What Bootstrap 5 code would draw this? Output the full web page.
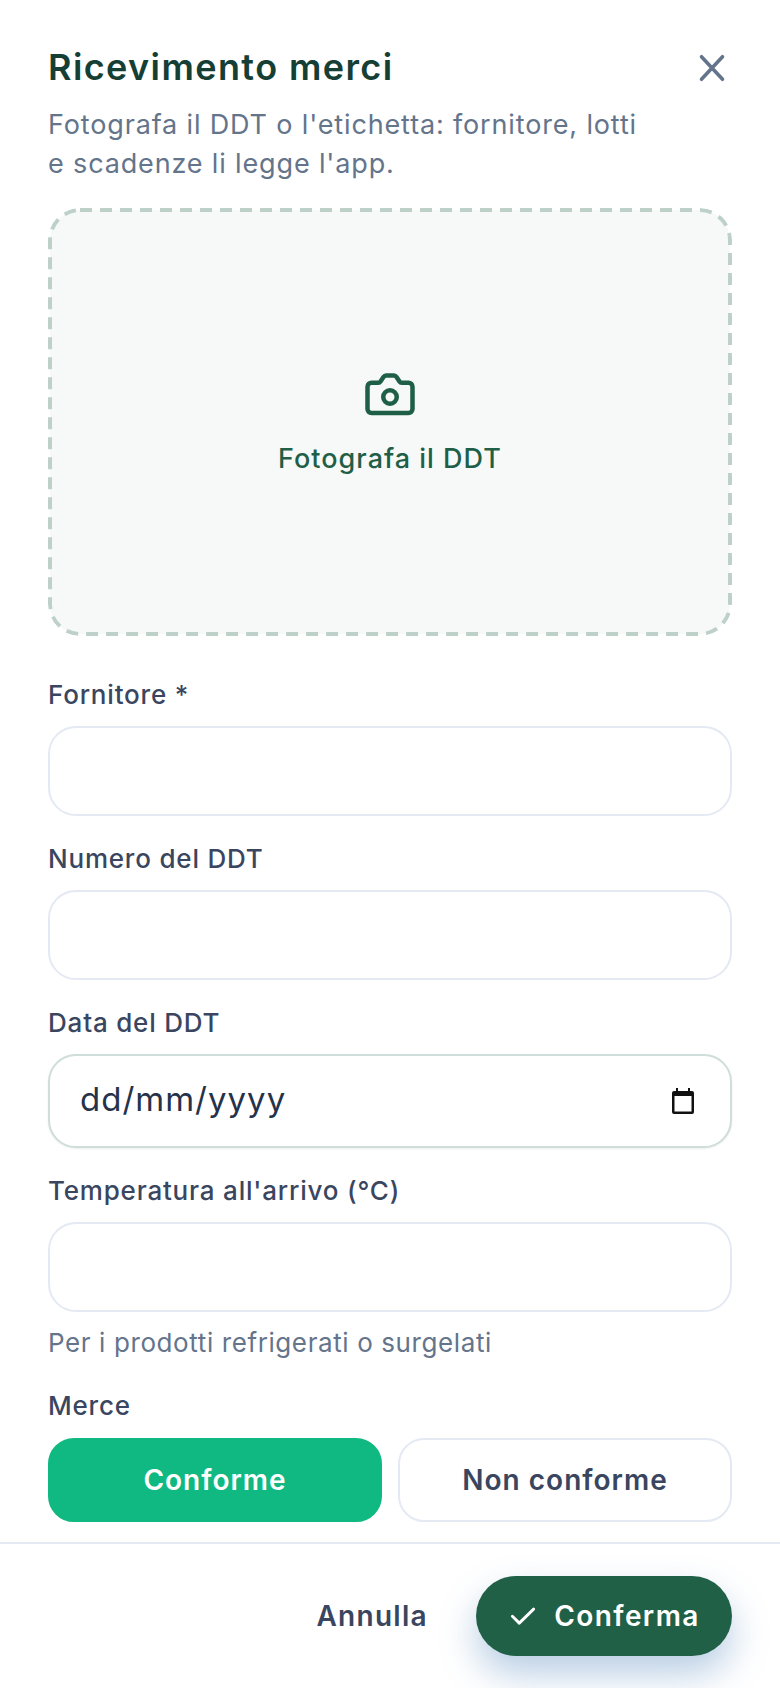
<!DOCTYPE html>
<html lang="it">
<head>
    <meta charset="UTF-8">
    <meta name="viewport" content="width=device-width, initial-scale=1.0">
    <title>Ricevimento merci</title>
    <link href="https://cdn.jsdelivr.net/npm/bootstrap@5.3.0/dist/css/bootstrap.min.css" rel="stylesheet">
    <style>
        html, body { height: 100%; }
        body { font-family: "Inter", "Liberation Sans", sans-serif; background: #fff; overflow: hidden; }
        .sheet { height: 1688px; }
        .sheet-body { padding: 48px 48px 0; overflow: hidden; }
        .sheet-title { font-size: 36px; font-weight: 600; line-height: 39px; color: #153e35; margin: 0; letter-spacing: 1.4px; }
        .sheet-close { width: 36px; height: 36px; color: #64748b; margin-right: 2px; }
        .sheet-sub { font-size: 27px; line-height: 39px; color: #64748b; margin: 18px 0 25px; letter-spacing: .85px; }
        .drop-zone { height: 428px; padding-bottom: 2px; color: #1f5f47; font-size: 27px; font-weight: 500; letter-spacing: 1px; border-radius: 32px;
            background: url("data:image/svg+xml,%3Csvg xmlns='http://www.w3.org/2000/svg' width='684' height='428'%3E%3Crect x='2' y='2' width='680' height='424' rx='30' fill='%23f6f9f8' stroke='%23bdd1c9' stroke-width='4' stroke-dasharray='12 8'/%3E%3C/svg%3E") no-repeat; }
        .field-label { display: block; font-size: 26px; font-weight: 500; line-height: 36px; color: #3a4660; padding-top: 1px; margin: 0 0 13px; letter-spacing: .8px; }
        .field-input { height: 90px; border: 2px solid #e4e9f3; border-radius: 28px; background: #fff; box-shadow: none; }
        .field-date { height: 94px; border-color: #d0dedb; font-size: 33px; line-height: 1; letter-spacing: 1px; color: #25324a; padding: 0 35px 3px 30px; box-shadow: 0 1px 2px rgba(15, 40, 30, .08); }
        .field-date svg { margin-top: 3px; }
        .field-hint { font-size: 26px; line-height: 36px; color: #64748b; margin-top: 13px; padding-bottom: 2px; letter-spacing: .6px; }
        .field-gap { margin-top: 24px; }
        .field-first { margin-top: 40px; }
        .choice-wrap { padding-top: 1px; }
        .choice { height: 84px; border-radius: 26px; font-size: 28px; font-weight: 600; border-width: 2px; letter-spacing: 1px; }
        .choice-on { background: #10b981; border-color: #10b981; color: #fff; }
        .choice-off { background: #fff; border-color: #e4e9f3; color: #3a4660; }
        .sheet-foot { border-top: 2px solid #e4e9f3; padding: 32px 48px 32px; height: 146px; flex: none; }
        .foot-cancel { font-size: 28px; font-weight: 600; color: #3a4660; border: 0; padding: 0; margin-right: 48px; letter-spacing: 1.3px; }
        .foot-ok { width: 256px; height: 80px; border-radius: 40px; border: 0; background: #206047; color: #fff; font-size: 28px; font-weight: 600; letter-spacing: 1.4px; box-shadow: 0 18px 36px rgba(60, 120, 180, .36); }
        .foot-ok:hover, .foot-ok:active { background: #206047; color: #fff; }
    </style>
</head>
<body>
    <div class="sheet d-flex flex-column">
        <div class="sheet-body flex-grow-1">
            <div class="d-flex justify-content-between align-items-center">
                <h1 class="sheet-title">Ricevimento merci</h1>
                <svg class="sheet-close" viewBox="0 0 24 24" fill="none" stroke="currentColor" stroke-width="2.4" stroke-linecap="round"><path d="M5 4.500l14 15M19 4.500l-14 15"/></svg>
            </div>
            <p class="sheet-sub">Fotografa il DDT o l'etichetta: fornitore, lotti<br>e scadenze li legge l'app.</p>

            <div class="drop-zone d-flex flex-column align-items-center justify-content-center gap-3">
                <svg width="60" height="60" viewBox="0 0 24 24" fill="none" stroke="currentColor" stroke-width="1.8" stroke-linejoin="round"><path d="M4.600 7.900h2.700c.4 0 .7-.2.900-.5l1.200-1.800c.2-.3.600-.6 1-.6h3.200c.4 0 .8.300 1 .6l1.200 1.800c.2.300.5.500.9.500h2.700c.9 0 1.600.7 1.600 1.600v8.900c0 .9-.7 1.600-1.600 1.600H4.600c-.9 0-1.600-.7-1.600-1.600V9.500c0-.9.700-1.600 1.600-1.600z"/><circle cx="12" cy="13.600" r="2.700"/></svg>
                <span>Fotografa il DDT</span>
            </div>

            <div class="field-first">
                <label class="field-label" for="fornitore">Fornitore *</label>
                <input type="text" id="fornitore" class="form-control field-input">
            </div>
            <div class="field-gap">
                <label class="field-label" for="numero">Numero del DDT</label>
                <input type="text" id="numero" class="form-control field-input">
            </div>
            <div class="field-gap">
                <label class="field-label">Data del DDT</label>
                <div class="form-control field-input field-date d-flex align-items-center justify-content-between">
                    <span>dd/mm/yyyy</span>
                    <svg width="24" height="26" viewBox="0 0 24 26"><path fill="#111" d="M5 0h2v3h10V0h2v3h2a2 2 0 0 1 2 2v19a2 2 0 0 1-2 2H3a2 2 0 0 1-2-2V5a2 2 0 0 1 2-2h2z"/><rect x="3.500" y="8" width="17" height="15.500" fill="#fff"/></svg>
                </div>
            </div>
            <div class="field-gap">
                <label class="field-label" for="temp">Temperatura all'arrivo (°C)</label>
                <input type="text" id="temp" class="form-control field-input">
                <div class="field-hint">Per i prodotti refrigerati o surgelati</div>
            </div>
            <div class="field-gap">
                <label class="field-label">Merce</label>
                <div class="choice-wrap">
                    <div class="row g-3">
                        <div class="col-6"><button type="button" class="btn choice choice-on w-100">Conforme</button></div>
                        <div class="col-6"><button type="button" class="btn choice choice-off w-100">Non conforme</button></div>
                    </div>
                </div>
            </div>
        </div>
        <div class="sheet-foot d-flex justify-content-end align-items-center">
            <button type="button" class="btn foot-cancel">Annulla</button>
            <button type="button" class="btn foot-ok d-flex align-items-center justify-content-center gap-3">
                <svg width="30" height="30" viewBox="0 0 24 24" fill="none" stroke="currentColor" stroke-width="2.300" stroke-linecap="round" stroke-linejoin="round"><path d="M3.500 12.200l5.500 5.500L20.500 6.500"/></svg>
                <span>Conferma</span>
            </button>
        </div>
    </div>
    <script src="https://cdn.jsdelivr.net/npm/bootstrap@5.3.0/dist/js/bootstrap.bundle.min.js"></script>
</body>
</html>
